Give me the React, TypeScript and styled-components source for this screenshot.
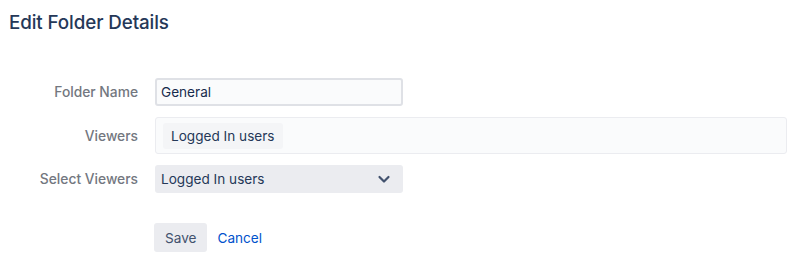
import styled, { createGlobalStyle } from "styled-components";

const GlobalStyle = createGlobalStyle`
  body {
    margin: 0;
    background: #ffffff;
    font-family: Inter, "Noto Sans", sans-serif;
    color: #172b4d;
  }
`;

const Page = styled.div`
  padding: 9px 12px 0 9px;
  width: 799px;
  box-sizing: border-box;
`;

const Title = styled.h2`
  margin: 0;
  font-size: 18.8px;
  font-weight: 500;
  color: #253858;
  line-height: 27px;
  letter-spacing: -0.1px;
`;

const Form = styled.div`
  margin-top: 42px;
  display: grid;
  grid-template-columns: 129px 1fr;
  column-gap: 17px;
  row-gap: 11px;
  align-items: center;
`;

const Label = styled.label`
  text-align: right;
  font-size: 13.8px;
  font-weight: 500;
  color: #737780;
`;

const TextInput = styled.div`
  width: 248px;
  height: 28px;
  box-sizing: border-box;
  border: 2px solid #dfe1e6;
  border-radius: 3px;
  background: #fafbfc;
  padding: 0 4px;
  display: flex;
  align-items: center;
  font-size: 13.6px;
  color: #172b4d;
`;

const TagBox = styled.div`
  height: 37px;
  box-sizing: border-box;
  border: 1px solid #ebecf0;
  border-radius: 3px;
  background: #fafbfc;
  padding: 0 7px;
  display: flex;
  align-items: center;
`;

const Tag = styled.span`
  background: #f4f5f7;
  border-radius: 3px;
  padding: 0 8px;
  height: 26px;
  display: inline-flex;
  align-items: center;
  font-size: 13.6px;
  color: #253858;
`;

const Select = styled.div`
  width: 248px;
  height: 28px;
  box-sizing: border-box;
  border-radius: 3px;
  background: #ebecf0;
  padding: 0 12px 0 6px;
  display: flex;
  align-items: center;
  justify-content: space-between;
  font-size: 13.6px;
  color: #253858;
`;

const Actions = styled.div`
  grid-column: 2;
  margin-top: 19px;
  display: flex;
  align-items: center;
  gap: 10px;
  margin-left: -1px;
`;

const Button = styled.button<{ $link?: boolean }>`
  font-family: inherit;
  font-size: 13.6px;
  height: 29px;
  border: none;
  border-radius: 3px;
  cursor: pointer;
  background: ${(p) => (p.$link ? "transparent" : "#ebecf0")};
  color: ${(p) => (p.$link ? "#0052cc" : "#42526e")};
  padding: ${(p) => (p.$link ? "0" : "0 11px")};
`;

const Chevron = () => (
  <svg width="14" height="14" viewBox="0 0 14 14">
    <path
      d="M2.5 5 L7 9.5 L11.5 5"
      fill="none"
      stroke="#42526e"
      strokeWidth="2.2"
      strokeLinecap="round"
      strokeLinejoin="round"
    />
  </svg>
);

const App = () => {
  return (
    <Page>
      <GlobalStyle />
      <Title>Edit Folder Details</Title>
      <Form>
        <Label>Folder Name</Label>
        <TextInput>General</TextInput>
        <Label>Viewers</Label>
        <TagBox>
          <Tag>Logged In users</Tag>
        </TagBox>
        <Label>Select Viewers</Label>
        <Select>
          Logged In users
          <Chevron />
        </Select>
        <Actions>
          <Button>Save</Button>
          <Button $link>Cancel</Button>
        </Actions>
      </Form>
    </Page>
  );
};

export default App;
